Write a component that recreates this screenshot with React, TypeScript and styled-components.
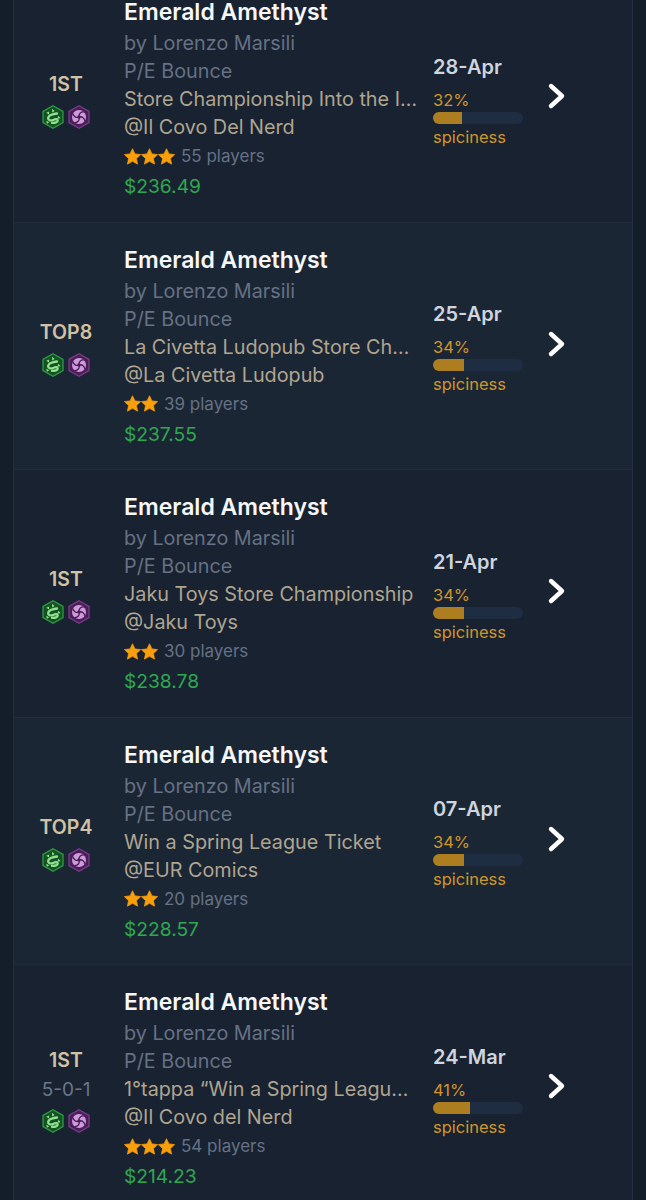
import type { ReactNode } from 'react';
import styled, { createGlobalStyle } from 'styled-components';

type Deck = {
  rank: string;
  record?: string;
  event: string;
  store: string;
  stars: number;
  players: number;
  price: string;
  date: string;
  spice: number;
};

const decks: Deck[] = [
  { rank: '1ST', event: 'Store Championship Into the Inklands', store: '@Il Covo Del Nerd', stars: 3, players: 55, price: '$236.49', date: '28-Apr', spice: 32 },
  { rank: 'TOP8', event: 'La Civetta Ludopub Store Championship', store: '@La Civetta Ludopub', stars: 2, players: 39, price: '$237.55', date: '25-Apr', spice: 34 },
  { rank: '1ST', event: 'Jaku Toys Store Championship', store: '@Jaku Toys', stars: 2, players: 30, price: '$238.78', date: '21-Apr', spice: 34 },
  { rank: 'TOP4', event: 'Win a Spring League Ticket', store: '@EUR Comics', stars: 2, players: 20, price: '$228.57', date: '07-Apr', spice: 34 },
  { rank: '1ST', record: '5-0-1', event: '1°tappa “Win a Spring League Ticket”', store: '@Il Covo del Nerd', stars: 3, players: 54, price: '$214.23', date: '24-Mar', spice: 41 },
];

const GlobalStyle = createGlobalStyle`
  html, body {
    margin: 0;
    height: 1200px;
    overflow: hidden;
    background: #141d2a;
  }
`;

const Page = styled.div`
  width: 646px;
  height: 1200px;
  overflow: hidden;
  box-sizing: border-box;
  padding: 0 13px;
  font-family: Inter, "Noto Sans", sans-serif;
`;

const List = styled.div`
  margin-top: -25px;
  border-left: 1px solid #232f40;
  border-right: 1px solid #232f40;
`;

const Row = styled.div<{ $alt?: boolean }>`
  height: 247.5px;
  box-sizing: border-box;
  display: flex;
  align-items: center;
  padding-left: 6px;
  background: ${p => (p.$alt ? '#1b2635' : '#182231')};
  border-bottom: 1px solid #202b3b;
`;

const RankCol = styled.div`
  width: 92px;
  flex-shrink: 0;
  padding-top: 3px;
  display: flex;
  flex-direction: column;
  align-items: center;
`;

const Rank = styled.div`
  font-size: 19.5px;
  line-height: 28px;
  font-weight: 600;
  color: #d2c2a4;
`;

const Record = styled.div`
  font-size: 19px;
  line-height: 28px;
  margin: 2px 0 -2px;
  color: #6b7688;
`;

const Inks = styled.div`
  display: flex;
  gap: 4px;
  margin-top: 7px;
`;

const InfoCol = styled.div`
  width: 294px;
  flex-shrink: 0;
  margin-left: 12px;
  display: flex;
  flex-direction: column;
`;

const Title = styled.div`
  font-size: 23px;
  line-height: 34px;
  font-weight: 600;
  color: #f6f7f9;
  white-space: nowrap;
`;

const Muted = styled.div`
  font-size: 19.8px;
  line-height: 28px;
  color: #667184;
`;

const Event = styled.div`
  font-size: 19.8px;
  line-height: 28px;
  color: #b0a590;
  white-space: nowrap;
  overflow: hidden;
  text-overflow: ellipsis;
`;

const StarsRow = styled.div`
  display: flex;
  align-items: center;
  height: 30px;
  gap: 6px;
  font-size: 17px;
  color: #667184;
`;

const Stars = styled.div`
  display: flex;
`;

const Price = styled.div`
  font-size: 19.2px;
  line-height: 30px;
  color: #2fa84f;
`;

const SideCol = styled.div`
  width: 90px;
  flex-shrink: 0;
  margin-left: 15px;
  padding-top: 3px;
  display: flex;
  flex-direction: column;
`;

const DateText = styled.div`
  font-size: 20px;
  line-height: 30px;
  font-weight: 600;
  color: #cfd5de;
  margin-bottom: 7px;
`;

const SpiceText = styled.div`
  font-size: 16.5px;
  line-height: 22px;
  color: #d0962a;
`;

const Track = styled.div`
  height: 12px;
  margin: 1px 0 2px;
  border-radius: 6px;
  background: #1f2d42;
  overflow: hidden;
`;

const Fill = styled.div`
  height: 100%;
  background: #ad7e20;
`;

const Chevron = styled.svg`
  width: 24px;
  height: 28px;
  margin: 0 0 4px 22px;
  flex-shrink: 0;
`;

const Hex = ({ color, border, children }: { color: string; border: string; children: ReactNode }) => (
  <svg width="22" height="24" viewBox="0 0 22 24">
    <polygon points="11,0.8 21,6.4 21,17.6 11,23.2 1,17.6 1,6.4" fill={color} stroke={border} strokeWidth="1.3" />
    {children}
  </svg>
);

const EmeraldInk = () => (
  <Hex color="#145224" border="#2f9a42">
    <path d="M15 8.500c-3.500.2-8.500 1.800-8.800 4.500s3.300 2.800 5 2 4.300-1.500 4.500.3-3 3-5.700 2.500" fill="none" stroke="#8fe08f" strokeWidth="2.300" strokeLinecap="round" />
    <path d="M10 3.800l2.600 2.100-2.400 1.600zM16.500 10.800l2 2.400-3.200.5zM4.200 7.800l3-1.200-.2 3zM4.300 15.800l3 1.400-2.400 1.500z" fill="#8fe08f" />
  </Hex>
);

const AmethystInk = () => (
  <Hex color="#4a1f58" border="#7c3a8c">
    <circle cx="11" cy="12" r="7" fill="#cf9bdb" />
    <path d="M11 12c-.5-3 1.500-5.500 5.500-5M11 12c2.800-.8 5 .5 6 4.200M11 12c1 2.800-.5 5.200-4.500 6M11 12c-2.500 1-5 .2-6.200-3.300" fill="none" stroke="#4a1f58" strokeWidth="1.300" strokeLinecap="round" />
    <circle cx="11" cy="12" r="1.800" fill="#4a1f58" />
  </Hex>
);

const Star = () => (
  <svg width="17" height="17" viewBox="0 0 24 24">
    <path d="M12 1l3.500 7.300 8 1-5.900 5.500 1.600 8L12 18.800l-7.200 4 1.600-8L.5 9.300l8-1z" fill="#fa9f0c" stroke="#fa9f0c" strokeWidth="1" strokeLinejoin="round" />
  </svg>
);

const App = () => (
  <Page>
    <GlobalStyle />
    <List>
      {decks.map((deck, i) => (
        <Row key={deck.date} $alt={i % 2 === 1}>
          <RankCol>
            <Rank>{deck.rank}</Rank>
            {deck.record && <Record>{deck.record}</Record>}
            <Inks>
              <EmeraldInk />
              <AmethystInk />
            </Inks>
          </RankCol>
          <InfoCol>
            <Title>Emerald Amethyst</Title>
            <Muted>by Lorenzo Marsili</Muted>
            <Muted>P/E Bounce</Muted>
            <Event>{deck.event}</Event>
            <Event>{deck.store}</Event>
            <StarsRow>
              <Stars>
                {Array.from({ length: deck.stars }, (_, n) => (
                  <Star key={n} />
                ))}
              </Stars>
              {deck.players} players
            </StarsRow>
            <Price>{deck.price}</Price>
          </InfoCol>
          <SideCol>
            <DateText>{deck.date}</DateText>
            <SpiceText>{deck.spice}%</SpiceText>
            <Track>
              <Fill style={{ width: `${deck.spice}%` }} />
            </Track>
            <SpiceText>spiciness</SpiceText>
          </SideCol>
          <Chevron viewBox="0 0 24 28">
            <path d="M6 4l11 10L6 24" fill="none" stroke="#fff" strokeWidth="4.400" strokeLinecap="round" strokeLinejoin="round" />
          </Chevron>
        </Row>
      ))}
    </List>
  </Page>
);

export default App;
